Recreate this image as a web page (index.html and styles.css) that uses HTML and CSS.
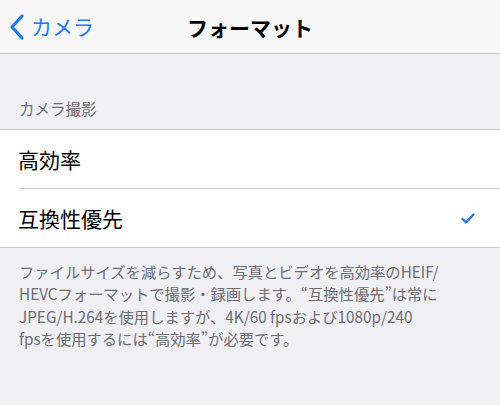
FILE: index.html
```html
<!DOCTYPE html>
<html lang="ja">
<head>
<meta charset="utf-8">
<link rel="stylesheet" href="styles.css">
</head>
<body>
<div class="nav">
  <div class="back">
    <svg class="chev" width="16" height="26" viewBox="0 0 16 26"><path d="M13 2 L3 13 L13 24" fill="none" stroke="#1b7cf2" stroke-width="3.2" stroke-linecap="round" stroke-linejoin="round"/></svg>
    <span class="back-label">カメラ</span>
  </div>
  <div class="title">フォーマット</div>
</div>
<div class="section-header">カメラ撮影</div>
<div class="group">
  <div class="cell"><span class="label">高効率</span></div>
  <div class="cell last"><span class="label">互換性優先</span>
    <svg class="check" width="14" height="11" viewBox="0 0 14 11"><path d="M1.5 6 L5 9.3 L12.5 1.5" fill="none" stroke="#1b7cf2" stroke-width="2.4" stroke-linecap="round" stroke-linejoin="round"/></svg>
  </div>
</div>
<div class="footer">ファイルサイズを減らすため、写真とビデオを高効率のHEIF/<br>HEVCフォーマットで撮影・録画します。“互換性優先”は常に<br>JPEG/H.264を使用しますが、4K/60 fpsおよび1080p/240<br>fpsを使用するには“高効率”が必要です。</div>
</body>
</html>
```
FILE: styles.css
```css
html, body {
  margin: 0;
  padding: 0;
}
body {
  width: 500px;
  height: 405px;
  background: #efeff4;
  font-family: "Noto Sans CJK JP", "Liberation Sans", sans-serif;
  overflow: hidden;
}
.nav {
  height: 54px;
  background: #f7f7f8;
  border-bottom: 1px solid #c8c7cc;
  box-sizing: border-box;
  display: flex;
  align-items: center;
  position: relative;
}
.back {
  display: flex;
  align-items: center;
  padding-left: 9px;
  gap: 6px;
  color: #1b7cf2;
  font-size: 21px;
}
.back-label {
  line-height: 1;
}
.title {
  position: absolute;
  left: 0;
  right: 0;
  text-align: center;
  font-size: 21px;
  font-weight: bold;
  color: #000;
  pointer-events: none;
}
.section-header {
  padding: 44px 0 0 19px;
  height: 31px;
  font-size: 15.5px;
  color: #6d6d72;
  line-height: 20px;
}
.group {
  background: #fff;
  border-top: 1px solid #c8c7cc;
  border-bottom: 1px solid #c8c7cc;
}
.cell {
  height: 58px;
  margin-left: 18px;
  padding-right: 25px;
  display: flex;
  align-items: center;
  justify-content: space-between;
  border-bottom: 1px solid #c8c7cc;
}
.cell.last {
  border-bottom: none;
}
.label {
  font-size: 21px;
  color: #000;
}
.footer {
  padding: 12px 10px 0 19px;
  font-size: 15.3px;
  line-height: 22.3px;
  color: #6d6d72;
  white-space: nowrap;
}
```
